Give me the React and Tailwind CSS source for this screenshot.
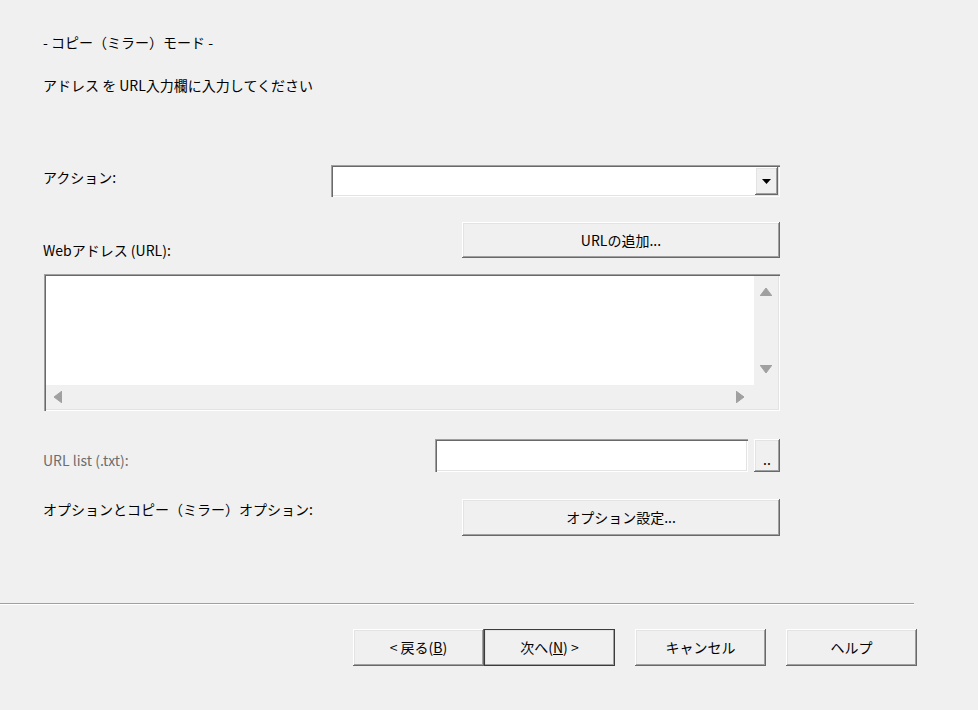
import React from 'react';

const font = { fontFamily: '"Noto Sans CJK JP", "Noto Sans", sans-serif' };

const sunken =
  'shadow-[inset_1px_1px_0_#a0a0a0,inset_2px_2px_0_#696969,inset_-1px_-1px_0_#ffffff,inset_-2px_-2px_0_#e3e3e3]';
const raised =
  'shadow-[inset_-1px_-1px_0_#696969,inset_1px_1px_0_#ffffff,inset_-2px_-2px_0_#a0a0a0,inset_2px_2px_0_#e3e3e3]';

function Button({ children, className = '', isDefault = false }) {
  return (
    <button
      className={`flex items-center justify-center bg-[#f0f0f0] text-[14px] text-black ${raised} ${
        isDefault ? 'outline outline-1 outline-[#3c3c3c] -outline-offset-1' : ''
      } ${className}`}
    >
      {children}
    </button>
  );
}

function Tri({ dir, className = '' }) {
  const pts = {
    up: '0,8 6,0 12,8',
    down: '0,0 12,0 6,8',
    left: '8,0 8,12 0,6',
    right: '0,0 0,12 8,6',
  }[dir];
  const w = dir === 'up' || dir === 'down' ? 12 : 8;
  const h = dir === 'up' || dir === 'down' ? 8 : 12;
  return (
    <svg width={w} height={h} viewBox={`0 0 ${w} ${h}`} className={className}>
      <polygon points={pts} fill="#a0a0a0" strokeLinejoin="round" stroke="#a0a0a0" strokeWidth="1" />
    </svg>
  );
}

export default function App() {
  return (
    <div className="w-[978px] h-[710px] bg-[#f0f0f0] text-black overflow-hidden" style={font}>
      <div className="pl-[43px] pr-[198px] pt-[33px]">
        <div className="h-[18px] leading-[18px] text-[14px]">- コピー（ミラー）モード -</div>
        <div className="mt-[25px] h-[18px] leading-[18px] text-[14px]">アドレス を URL入力欄に入力してください</div>

        {/* Action */}
        <div className="mt-[71px] flex items-center h-[32px]">
          <div className="flex-1 text-[14px] leading-[18px] -mt-[8px]">アクション:</div>
          <div className={`w-[449px] h-[32px] bg-white flex justify-end p-[2px] ${sunken}`}>
            <div className={`w-[23px] h-full bg-[#f0f0f0] flex items-center justify-center ${raised}`}>
              <svg width="9" height="5" viewBox="0 0 9 5">
                <polygon points="0,0 9,0 4.5,5" fill="#000" />
              </svg>
            </div>
          </div>
        </div>

        {/* Web address */}
        <div className="mt-[25px] flex items-end h-[36px]">
          <div className="flex-1 text-[14px] leading-[18px] -mb-[1px]">Webアドレス (URL):</div>
          <Button className="w-[318px] h-[36px]">URLの追加...</Button>
        </div>

        <div className={`mt-[16px] ml-[1px] w-[736px] h-[137px] bg-[#f0f0f0] p-[2px] ${sunken}`}>
          <div className="grid grid-cols-[1fr_24px] grid-rows-[1fr_24px] w-full h-full">
            <div className="bg-white" />
            <div className="flex flex-col items-center justify-between pt-[12px] pb-[12px]">
              <Tri dir="up" />
              <Tri dir="down" />
            </div>
            <div className="flex items-center justify-between pl-[8px] pr-[10px]">
              <Tri dir="left" />
              <Tri dir="right" />
            </div>
            <div />
          </div>
        </div>

        {/* URL list */}
        <div className="mt-[28px] flex items-start h-[33px]">
          <div className="flex-1 pt-[12px] text-[14px] leading-[18px] text-[#6d6d6d]">URL list (.txt):</div>
          <div className={`w-[313px] h-[33px] bg-white ${sunken}`} />
          <Button className="ml-[6px] w-[26px] h-[33px] !items-end pb-[8px] leading-[10px]">..</Button>
        </div>

        {/* Options */}
        <div className="mt-[27px] flex items-start h-[37px]">
          <div className="flex-1 pt-[1px] text-[14px] leading-[18px]">オプションとコピー（ミラー）オプション:</div>
          <Button className="w-[318px] h-[37px]">オプション設定...</Button>
        </div>
      </div>

      {/* separator */}
      <div className="mt-[67px] w-[914px] h-[2px] border-t border-t-[#a0a0a0] border-b border-b-white" />

      <div className="mt-[24px] flex pl-[353px]">
        <Button className="w-[131px] h-[37px]">
          &lt; 戻る(<span className="underline">B</span>)
        </Button>
        <Button isDefault className="w-[131px] h-[37px]">
          次へ(<span className="underline">N</span>) &gt;
        </Button>
        <Button className="ml-[20px] w-[131px] h-[37px]">キャンセル</Button>
        <Button className="ml-[20px] w-[131px] h-[37px]">ヘルプ</Button>
      </div>
    </div>
  );
}
